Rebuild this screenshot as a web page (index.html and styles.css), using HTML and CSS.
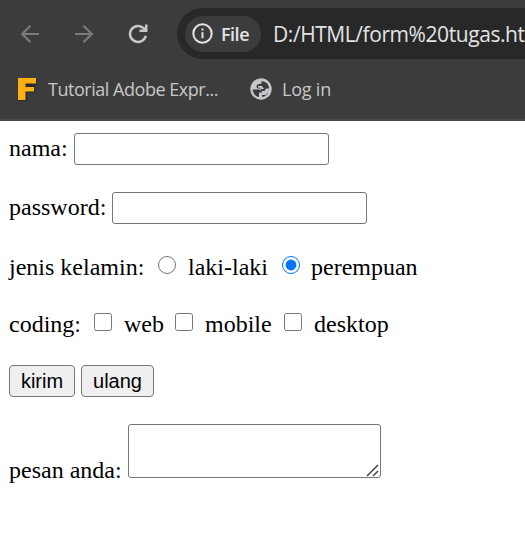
FILE: index.html
```html
<!DOCTYPE html>
<html lang="id">
<head>
<meta charset="utf-8">
<title>form tugas</title>
<link rel="stylesheet" href="styles.css">
</head>
<body>
<header class="browser">
  <div class="toolbar">
    <svg class="nav back" width="20" height="20" viewBox="0 0 20 20"><path d="M19 10H2.500M10.500 1.700L2.200 10l8.300 8.300"/></svg>
    <svg class="nav forward" width="20" height="20" viewBox="0 0 20 20"><path d="M1 10h16.500M9.500 1.700l8.300 8.300l-8.300 8.300"/></svg>
    <svg class="nav reload" width="20" height="20" viewBox="0 0 20 20"><path d="M17.800 11.800A8 8 0 1 1 15.600 4.200L17.500 6.500"/><path d="M18.200 0.500V6.700H11.500"/></svg>
    <div class="address">
      <div class="chip">
        <svg width="21" height="21" viewBox="0 0 21 21"><circle cx="10.500" cy="10.500" r="9.200" fill="none" stroke="#e3e3e3" stroke-width="2"/><path d="M10.500 9.300v6M10.500 5.600v2" stroke="#e3e3e3" stroke-width="2"/></svg>
        <span class="file">File</span>
      </div>
      <span class="url">D:/HTML/form%20tugas.html</span>
    </div>
  </div>
  <div class="bookmarks">
    <svg class="favicon" width="20" height="24" viewBox="0 0 20 24"><path d="M3 2h17v6h-2v8h-8v8H2z" fill="#29282a"/><path d="M1 1h18v5.500H8.500V10H17v4.500H8.500V23H1z" fill="#fdb012"/></svg>
    <span class="tutorial">Tutorial Adobe Expr...</span>
    <svg class="globe" width="22" height="22" viewBox="0 0 22 22"><circle cx="11" cy="11" r="10.700" fill="#c4c7cc"/><path d="M2.700 11.500H8.500Q12 11.800 12 14.500H9V19C5.500 18.500 2.700 15 2.700 11.500zM7.500 6.500L11.500 5.500V3Q18.500 3.500 19.300 10.500H16L14.500 13H11.500L10.500 10.500H7.500Q5.500 8.500 7.500 6.500zM12 17H15.500L18.500 14Q16.500 18.500 12 19z" fill="#3c3c3c"/><path d="M8 8h4l2 3h-3L9.500 9.500H8z" fill="#c4c7cc"/></svg>
    <span class="login">Log in</span>
  </div>
</header>
<form class="page">
  <div class="row name"><label>nama:</label><input class="field" type="text"></div>
  <div class="row pass"><label>password:</label><input class="field" type="password"></div>
  <div class="row gender"><span class="lead">jenis kelamin:</span><input type="radio" name="g"><label class="male">laki-laki</label><input type="radio" name="g" checked><label>perempuan</label></div>
  <div class="row coding"><span class="lead">coding:</span><input type="checkbox"><label class="web">web</label><input type="checkbox"><label class="mobile">mobile</label><input type="checkbox"><label>desktop</label></div>
  <div class="row actions"><button class="send" type="button">kirim</button><button class="reset" type="button">ulang</button></div>
  <div class="row message"><label>pesan anda:</label><div class="area-wrap"><textarea></textarea><svg class="grip" width="13" height="13" viewBox="0 0 13 13"><path d="M1 12L12 1M7 12l5-5" stroke="#444" stroke-width="1.500"/></svg></div></div>
</form>
</body>
</html>
```
FILE: styles.css
```css
* { box-sizing: border-box; }
body {
  margin: 0;
  height: 543px;
  overflow: hidden;
  background: #fff;
  color: #000;
  font: 24px/28px "Liberation Serif", serif;
}
.browser {
  height: 121px;
  overflow: hidden;
  background: #3c3c3c;
  border-bottom: 2px solid #4a4a4a;
  font-family: "Open Sans", "Noto Sans", sans-serif;
  white-space: nowrap;
}
.toolbar {
  display: flex;
  align-items: center;
  height: 51px;
  margin-top: 8px;
}
.nav { flex: none; fill: none; stroke: #7b7b7b; stroke-width: 2.2; }
.back { margin-left: 20px; }
.forward { margin-left: 34px; }
.reload { margin-left: 34px; stroke: #c7c7c7; stroke-width: 2.5; }
.address {
  display: flex;
  flex: none;
  align-items: center;
  width: 400px;
  height: 51px;
  margin-left: 29px;
  padding-left: 8px;
  border-radius: 26px;
  background: #282828;
  color: #e3e3e3;
}
.chip {
  display: flex;
  flex: none;
  align-items: center;
  width: 76px;
  height: 36px;
  padding-left: 7px;
  border-radius: 18px;
  background: #3c3c3c;
}
.file { margin-left: 8px; font-size: 18px; font-weight: 600; letter-spacing: -0.5px; }
.url { margin-left: 12px; font-size: 21px; letter-spacing: -0.43px; }
.bookmarks {
  display: flex;
  align-items: center;
  height: 60px;
  padding-left: 17px;
  color: #c7c7c7;
  font-size: 18px;
}
.favicon { flex: none; }
.tutorial { width: 171px; margin-left: 11px; letter-spacing: -0.47px; }
.globe { flex: none; margin-left: 31px; }
.login { margin-left: 10px; letter-spacing: -0.2px; }
.page { padding: 12px 0 0 9px; }
.row { display: flex; align-items: flex-start; white-space: nowrap; }
.row label, .lead { flex: none; }
.row label { padding-top: 1px; }
input, button, textarea { margin: 0; }
.field {
  width: 255px;
  height: 32px;
  border: 1px solid #767676;
  border-radius: 3px;
}
.name { height: 59px; }
.name label { width: 65px; }
.pass { height: 61px; }
.pass label { width: 103px; }
.gender { height: 57px; }
.gender .lead { width: 149px; }
.gender input { flex: none; width: 18px; height: 18px; margin: 3px 12px 0 0; }
.gender input:checked { margin-right: 11px; }
.male { width: 94px; }
.row.gender label, .row.coding label { padding-top: 0; }
.coding { height: 55px; }
.coding .lead { width: 85px; }
.coding input { flex: none; width: 18px; height: 18px; margin: 3px 12px 0 0; }
.coding .web { width: 51px; }
.mobile { width: 79px; }
.actions { height: 59px; gap: 6px; }
button {
  height: 32px;
  padding: 0;
  border: 1px solid #767676;
  border-radius: 4px;
  background: #efefef;
  color: #000;
  font: 20px/28px "Liberation Sans", sans-serif;
}
.send { width: 66px; }
.reset { width: 73px; }
.row.message label { width: 119px; padding-top: 32px; }
.area-wrap { position: relative; width: 253px; height: 54px; }
textarea {
  display: block;
  width: 253px;
  height: 54px;
  border: 1px solid #767676;
  border-radius: 3px;
  resize: none;
}
.grip { position: absolute; right: 2px; bottom: 1px; }
```
